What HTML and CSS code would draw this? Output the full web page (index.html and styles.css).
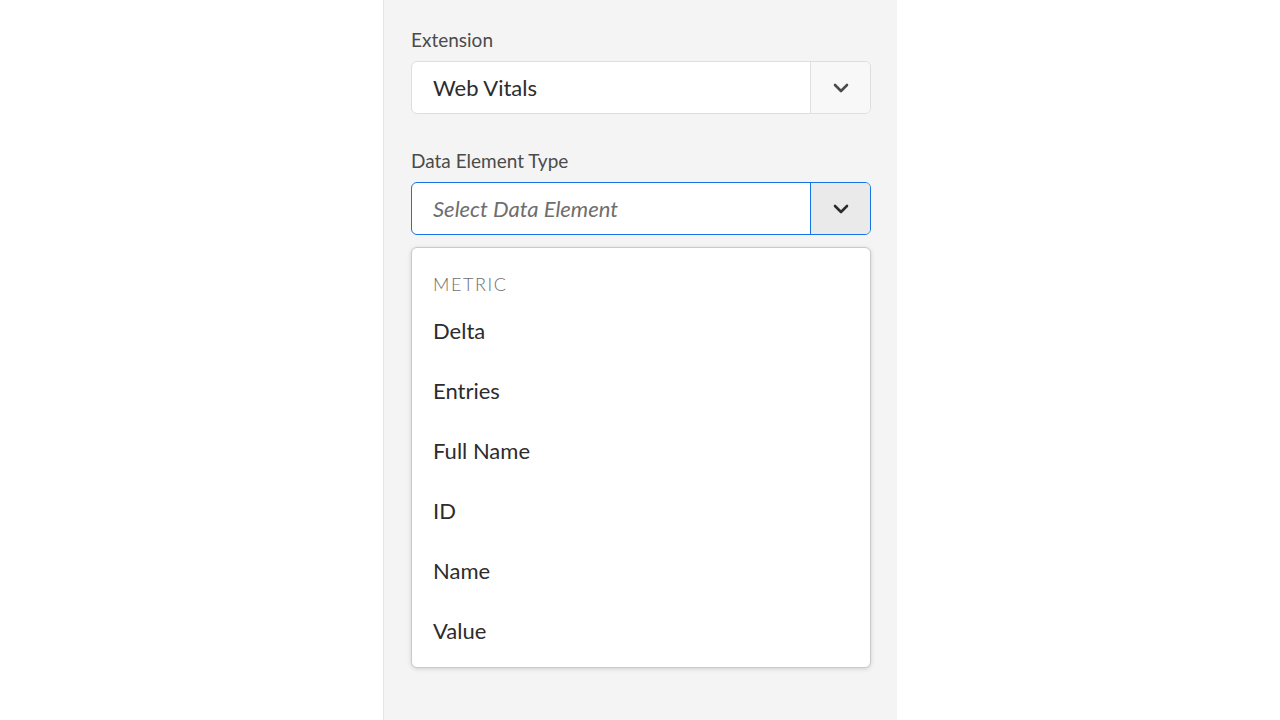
FILE: index.html
```html
<!DOCTYPE html>
<html>
<head>
<meta charset="utf-8">
<link rel="stylesheet" href="styles.css">
</head>
<body>
<div class="page">
  <div class="panel">
    <div class="field field-first">
      <label class="label">Extension</label>
      <div class="picker">
        <div class="picker-value">Web Vitals</div>
        <div class="picker-btn">
          <svg width="16" height="10" viewBox="0 0 16 10"><path d="M2 2l6 6 6-6" fill="none" stroke="currentColor" stroke-width="2.6" stroke-linecap="round" stroke-linejoin="round"/></svg>
        </div>
      </div>
    </div>
    <div class="field field-second">
      <label class="label">Data Element Type</label>
      <div class="picker focused">
        <div class="picker-value placeholder">Select Data Element</div>
        <div class="picker-btn">
          <svg width="16" height="10" viewBox="0 0 16 10"><path d="M2 2l6 6 6-6" fill="none" stroke="currentColor" stroke-width="2.6" stroke-linecap="round" stroke-linejoin="round"/></svg>
        </div>
      </div>
    </div>
    <div class="popover">
      <div class="section-title">METRIC</div>
      <div class="item">Delta</div>
      <div class="item">Entries</div>
      <div class="item">Full Name</div>
      <div class="item">ID</div>
      <div class="item">Name</div>
      <div class="item">Value</div>
    </div>
  </div>
</div>
</body>
</html>
```

FILE: styles.css
```css
html, body {
  margin: 0;
  padding: 0;
  background: #ffffff;
  font-family: "Lato", "Open Sans", sans-serif;
}
.page {
  display: flex;
  justify-content: flex-start;
  height: 720px;
  overflow: hidden;
}
.panel {
  margin-left: 383px;
  width: 460px;
  height: 720px;
  background: #f4f4f4;
  border-left: 1px solid #e4e4e4;
  padding: 28px 26px 0 27px;
  box-sizing: content-box;
}
.field {
  display: flex;
  flex-direction: column;
}
.field-first {
  margin-bottom: 35px;
}
.field-second {
  margin-bottom: 12px;
}
.label {
  font-size: 19px;
  line-height: 24px;
  color: #4b4b4b;
  margin-bottom: 9px;
}
.picker {
  display: flex;
  height: 53px;
  box-sizing: border-box;
  width: 460px;
  border: 1px solid #dedede;
  border-radius: 6px;
  background: #ffffff;
  overflow: hidden;
}
.picker-value {
  flex: 1;
  display: flex;
  align-items: center;
  padding-left: 21px;
  font-size: 22px;
  color: #2c2c2c;
}
.picker-value.placeholder {
  font-style: italic;
  color: #6e6e6e;
}
.picker-btn {
  width: 59px;
  display: flex;
  align-items: center;
  justify-content: center;
  background: #f8f8f8;
  border-left: 1px solid #e1e1e1;
  color: #4b4b4b;
}
.picker.focused {
  border: 1.5px solid #1473e6;
}
.picker.focused .picker-btn {
  background: #eaeaea;
  border-left: 1.5px solid #1473e6;
  color: #2c2c2c;
}
.popover {
  width: 460px;
  box-sizing: border-box;
  background: #ffffff;
  border: 1px solid #cacaca;
  border-radius: 6px;
  box-shadow: 0 1px 4px rgba(0, 0, 0, 0.15);
  padding: 7px 0 7px 0;
}
.section-title {
  padding: 17px 21px 4px 21px;
  line-height: 24px;
  font-size: 18px;
  font-weight: 300;
  letter-spacing: 1.6px;
  color: #6e6e6e;
}
.item {
  height: 60px;
  display: flex;
  align-items: center;
  padding-left: 21px;
  font-size: 22px;
  color: #2c2c2c;
}
```
